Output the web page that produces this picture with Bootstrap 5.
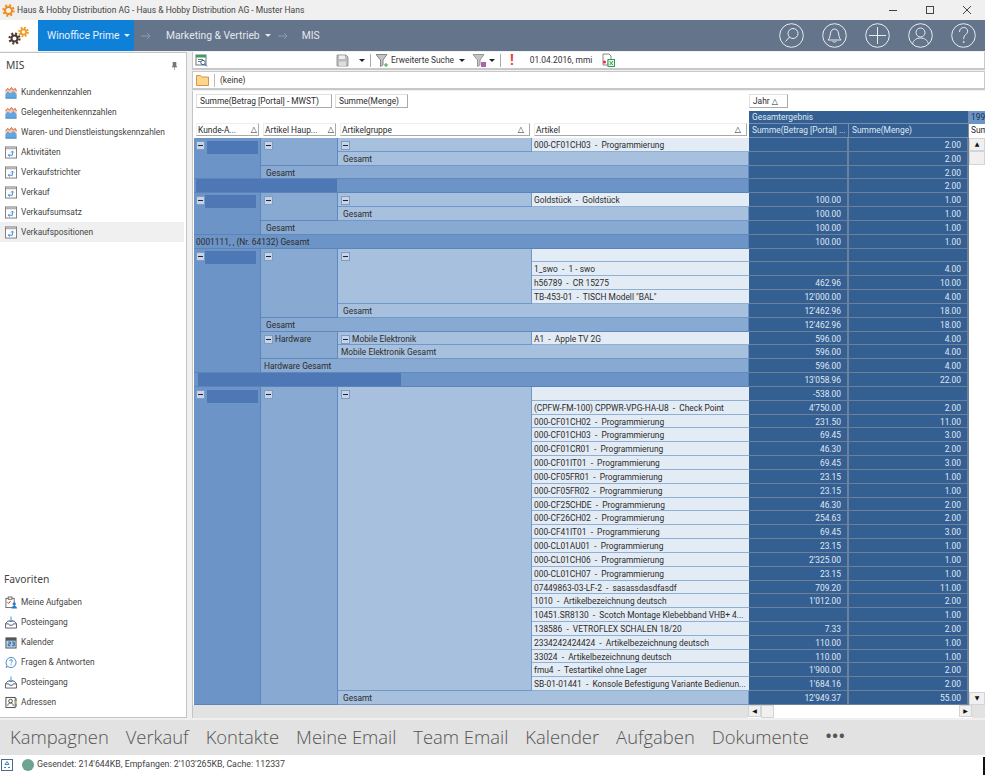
<!DOCTYPE html>
<html lang="de">
<head>
<meta charset="utf-8">
<title>Winoffice Prime - MIS</title>
<link href="https://cdn.jsdelivr.net/npm/bootstrap@5.3.0/dist/css/bootstrap.min.css" rel="stylesheet">
<style>
html,body{height:775px;overflow:hidden;background:#fff}
body{font-family:Roboto,"Liberation Sans",sans-serif;font-size:8.4px;color:#333}
.app-frame{width:985px;height:775px}
.title-strip{height:20px;background:#f0f0f0;font-size:8.5px;color:#444}
.title-icon{margin:0 2px 0 2px}
.win-btn{width:37px;text-align:center;line-height:1}
.top-nav{height:31px;background:#64748a;color:#e4e8ee;font-size:10.3px}
.logo-box{width:38px;background:#fff}
.prime-tab{width:96px;background:#0f80d8;color:#e6f2fc;padding-left:9px;white-space:nowrap}
.nav-caret{display:inline-block;border:3px solid transparent;border-top:3px solid currentColor;border-bottom:0;margin-left:5px;vertical-align:middle}
.nav-arrow{margin:0 15px 0 7px}
.nav-last{margin-left:-1px}
.nav-round{width:43px}
.workspace{background:#f0f0f0;min-height:0}
.side-panel{width:187px;background:#fff;border:1px solid #c4c4c4;border-left:0;margin:1px 5px 2px 0;padding-bottom:5px}
.side-head{height:26px;padding:0 8px 0 6px;font-family:"Noto Sans",sans-serif;font-size:10.3px;color:#444}
.side-gap{height:3px}
.side-item{height:20px;padding-left:5px;font-size:8.4px;color:#444;gap:4px;margin-right:2px;white-space:nowrap}
.side-item svg{flex-shrink:0}
.side-item.is-on{background:#f0f0f0}
.fav-head{font-family:"Noto Sans",sans-serif;font-size:10.3px;color:#444;padding-left:4px;margin-bottom:5px}
.main-panel{min-width:0;width:793px;margin-top:1px}
.tool-row{height:18px;background:#fff;border:1px solid #c8c8c8;border-width:0 1px 2px 1px;margin-bottom:1px;padding-left:2px;font-size:8.4px;color:#333}
.tool-row.row-two{height:19px;margin-bottom:1px;padding-left:3px;border-top:1px solid #c8c8c8}
.t-save{margin-left:128px}
.t-sep{width:1px;height:13px;background:#aaa;margin:0 5px}
.t-drop{display:inline-block;border:3px solid transparent;border-top:3px solid #222;border-bottom:0}
.t-gap1{margin-left:10px}
.t-text1{margin-left:2px}
.t-gap3{margin-left:8px}
.t-gap4{margin-left:3px}
.t-gap6{margin-left:5px}
.t-bang{color:#e8383c;font-size:14px;font-weight:700;margin:0 16px 0 4px;line-height:1}
.t-gap5{margin-left:9px}
.sep2{width:1px;height:13px;background:#bbb;margin:0 5px}
.pivot-box{background:#e2e2e2;border-left:1px solid #c4c4c4;min-height:0;margin-bottom:2px}
.pivot-grid{display:grid;grid-template-columns:67px 77px 194px 217px 100px 120px 16px;grid-template-rows:20px 13px 14px repeat(41,13.83px);padding-left:1px;background:#fff;overflow:hidden;font-size:8.4px;line-height:14px;color:#2c2c2c}
.pc{overflow:hidden;white-space:nowrap;padding:0 3px;min-width:0}
.field-row{grid-column:span 4;padding:3px 0 0 2px;gap:3px;background:#fff}
.jahr-row{grid-column:span 3;padding-top:3px;background:#fff}
.field-btn{height:14px;border:1px solid #e0e0e0;border-right-color:#aaa;border-bottom-color:#aaa;padding:0 3px;background:#fff;line-height:12px;white-space:nowrap}
.fb1{width:136px}.fb2{width:73px}.fb3{width:39px}
.blank{grid-column:span 4;background:#fff}
.col-btn{background:#fff;border:1px solid #eee;border-right-color:#aaa;border-bottom-color:#aaa;margin:-1px 2px 2px 2px;padding:0 1px;line-height:12px;white-space:nowrap;overflow:hidden;position:relative}
.col-btn.first{margin-left:2px}
.tri{font-family:"DejaVu Sans",sans-serif;font-size:8px}
.dark-head{background:#335f92;color:#dfe8f3;border-right:1px solid #7a8ea8;border-bottom:1px solid #7a8ea8;line-height:12px}
.year-cell{background:#6c94c6;color:#16304f;padding:0 2px;line-height:12px}
.year-sub{background:#fff;padding:0 2px;color:#2c2c2c;line-height:12px}
.k{background:#6c94c6;border-bottom:1px solid #5b84bb;border-right:1px solid #5b84bb;padding-left:2px}
.h{background:#88a9d2;border-bottom:1px solid #5f8abf;border-right:1px solid #5f8abf}
.g{background:#a6c0de;border-bottom:1px solid #6f98c8;border-right:1px solid #6f98c8}
.a{background:#e3ebf5;border-bottom:1px solid #8fb0d6;padding-left:2px}
.v{background:#335f92;color:#e0e8f2;text-align:right;padding:0 6px 0 0;border-right:2px solid #6e8199;border-bottom:1px solid #6e8199}
.cs2{grid-column:span 2}.cs3{grid-column:span 3}.cs4{grid-column:span 4}
.rs2{grid-row:span 2}.rs3{grid-row:span 3}.rs4{grid-row:span 4}.rs5{grid-row:span 5}.rs6{grid-row:span 6}.rs9{grid-row:span 9}.rs22{grid-row:span 22}.rs23{grid-row:span 23}
.pad-s{padding-left:5px}
.pm{display:inline-block;width:9px;height:9px;background:#c5d4e8;border:1px solid #7d9bc3;vertical-align:top;margin-top:3px;position:relative}
.pm::after{content:"";position:absolute;left:1px;right:1px;top:3px;height:1px;background:#223}
.redact{display:inline-block;background:#4d78b5;height:13px;vertical-align:top;margin-top:2px}
.r-a{width:51px;margin-left:2px;margin-top:3px}
.r-b{width:51px;margin-left:0}
.r-c{width:141px;height:14px;margin:0}
.r-d{width:203px;height:14px;margin:0 0 0 2px}
.v-scroll{grid-row:span 41;background:#fff}
.sc-btn{height:13px;background:#f0f0f0;border:1px solid #d4d4d4;text-align:center;line-height:10px;font-size:6px;color:#111;font-family:"DejaVu Sans",sans-serif}
.sc-thumb{height:14px;background:#f0f0f0;border:1px solid #d4d4d4}
.h-scroll{height:13px;padding-left:555px}
.h-track{width:224px;background:#fff}
.h-end{width:13px;height:12px;background:#f0f0f0;border:1px solid #d4d4d4;font-size:6px;line-height:10px;text-align:center;color:#111;font-family:"DejaVu Sans",sans-serif}
.h-thumb{width:13px;background:#f0f0f0;border:1px solid #d4d4d4}
.tab-strip{height:35px;background:#e2e2e2;font-family:"Open Sans",sans-serif;font-weight:300;font-size:18.4px;color:#555;padding-left:10px;gap:17px;line-height:1}
.tab-dots{letter-spacing:1px;font-weight:700;font-size:15px;margin-top:-4px}
.status-strip{height:20px;background:#fff;font-size:8.8px;color:#444;padding-left:1px}
.state-dot{width:12px;height:12px;border-radius:50%;background:#6fa391;margin:0 3px 0 9px}
.edge-mark{width:2px;height:18px;background:#111;margin-top:2px}
</style>
</head>
<body>
<svg width="0" height="0" class="d-block position-absolute">
<defs>
<symbol id="i-chart" viewBox="0 0 13 13"><path d="M.5 12.500V5l2.500-3 2 2 2-3 2 3 2-2 1.500 3v7.500z" fill="#f4c9b4"/><path d="M.5 12.500V8l2.500-2.500 3 2 3-2.500 3.500 3v4.500z" fill="#62a6df"/><path d="M.5 12.700h12" stroke="#3b7db8"/><path d="M.5 5l2.500-3 2 2 2-3 2 3 2-2 1.500 3" fill="none" stroke="#d0562a"/></symbol>
<symbol id="i-rep" viewBox="0 0 13 13"><rect x=".5" y=".5" width="12" height="12" fill="#fff" stroke="#777"/><rect x="1" y="1" width="11" height="2" fill="#b0b0b0"/><path d="M3.500 9.500H8V5M6.500 6.500 8 5l1.500 1.500M5 8 3.500 9.500 5 11" fill="none" stroke="#3a85d0"/></symbol>
<symbol id="i-inbox" viewBox="0 0 13 13"><path d="M.5 8l2.500-3h7l2.500 3v4.500H.5z" fill="#fff" stroke="#556"/><path d="M.5 8H4l1 1.500h3L9 8h3.500" fill="none" stroke="#556"/><path d="M6.500 0v6M4.500 4l2 2 2-2" fill="none" stroke="#3a85d0"/></symbol>
</defs>
</svg>
<div class="app-frame d-flex flex-column">
  <div class="title-strip d-flex align-items-center">
    <svg class="title-icon" width="13" height="13" viewBox="0 0 13 13"><circle cx="6.500" cy="6.500" r="3.500" fill="none" stroke="#f08c1e" stroke-width="2"/><circle cx="6.500" cy="6.500" r="5.200" fill="none" stroke="#f08c1e" stroke-width="2" stroke-dasharray="2 2.080"/></svg>
    <span class="flex-grow-1">Haus &amp; Hobby Distribution AG - Haus &amp; Hobby Distribution AG - Muster Hans</span>
    <span class="win-btn"><svg width="10" height="10" viewBox="0 0 10 10"><path d="M1 5.500h8" stroke="#444"/></svg></span>
    <span class="win-btn"><svg width="10" height="10" viewBox="0 0 10 10"><rect x="1.500" y="1.500" width="7" height="7" fill="none" stroke="#444"/></svg></span>
    <span class="win-btn"><svg width="10" height="10" viewBox="0 0 10 10"><path d="M1 1l8 8M9 1l-8 8" stroke="#444"/></svg></span>
  </div>
  <div class="top-nav d-flex align-items-stretch">
    <div class="logo-box d-flex align-items-center justify-content-center">
      <svg width="24" height="20" viewBox="0 0 24 20"><circle cx="7.500" cy="12.500" r="3" fill="none" stroke="#4a3a30" stroke-width="2"/><circle cx="7.500" cy="12.500" r="5" fill="none" stroke="#4a3a30" stroke-width="2.200" stroke-dasharray="2 1.930"/><circle cx="16.500" cy="6" r="2.600" fill="none" stroke="#f09a1e" stroke-width="1.800"/><circle cx="16.500" cy="6" r="4.300" fill="none" stroke="#f09a1e" stroke-width="2" stroke-dasharray="1.800 1.570"/></svg>
    </div>
    <div class="prime-tab d-flex align-items-center">Winoffice Prime<span class="nav-caret"></span></div>
    <div class="d-flex align-items-center">
      <svg class="nav-arrow" width="10" height="8" viewBox="0 0 10 8"><path d="M0 4h9M6 1l3 3-3 3" fill="none" stroke="#8e9bad"/></svg>
      <span>Marketing &amp; Vertrieb</span><span class="nav-caret"></span>
      <svg class="nav-arrow" width="10" height="8" viewBox="0 0 10 8"><path d="M0 4h9M6 1l3 3-3 3" fill="none" stroke="#8e9bad"/></svg>
      <span class="nav-last">MIS</span>
    </div>
    <div class="ms-auto d-flex align-items-center">
      <span class="nav-round d-flex justify-content-center"><svg width="25" height="25" viewBox="0 0 25 25" fill="none" stroke="#e8ecf1"><circle cx="12.500" cy="12.500" r="11.800"/><circle cx="14" cy="10.500" r="5"/><path d="M10.500 14l-4 4.500"/></svg></span>
      <span class="nav-round d-flex justify-content-center"><svg width="25" height="25" viewBox="0 0 25 25" fill="none" stroke="#e8ecf1"><circle cx="12.500" cy="12.500" r="11.800"/><path d="M6 17c2-2 2-4 2.500-7 .5-2.500 2-4 4-4s3.500 1.500 4 4c.5 3 .5 5 2.500 7zM10.500 18c.5 1.500 3.500 1.500 4 0"/></svg></span>
      <span class="nav-round d-flex justify-content-center"><svg width="25" height="25" viewBox="0 0 25 25" fill="none" stroke="#e8ecf1"><circle cx="12.500" cy="12.500" r="11.800"/><path d="M12.500 4v17M4 12.500h17"/></svg></span>
      <span class="nav-round d-flex justify-content-center"><svg width="25" height="25" viewBox="0 0 25 25" fill="none" stroke="#e8ecf1"><circle cx="12.500" cy="12.500" r="11.800"/><circle cx="12.500" cy="9.500" r="4.500"/><path d="M4.500 21c1-4 4-6 8-6s7 2 8 6"/></svg></span>
      <span class="nav-round d-flex justify-content-center"><svg width="25" height="25" viewBox="0 0 25 25" fill="none" stroke="#e8ecf1"><circle cx="12.500" cy="12.500" r="11.800"/><path d="M8.500 9c0-3 2-4.500 4.200-4.500s4 1.500 4 3.700c0 3.300-4 3.300-4 7v1"/><circle cx="12.700" cy="19" r=".6"/></svg></span>
    </div>
  </div>
  <div class="workspace flex-grow-1 d-flex">
    <aside class="side-panel d-flex flex-column flex-shrink-0">
      <div class="side-head d-flex align-items-center justify-content-between"><span>MIS</span><svg width="7" height="8" viewBox="0 0 7 8"><path d="M2 0h3v4l1 1H1l1-1zM3.500 5v3" fill="#777" stroke="#777" stroke-width=".6"/></svg></div>
      <div class="side-gap"></div>
      <div class="side-item d-flex align-items-center"><svg width="12" height="13"><use href="#i-chart"/></svg>Kundenkennzahlen</div>
      <div class="side-item d-flex align-items-center"><svg width="12" height="13"><use href="#i-chart"/></svg>Gelegenheitenkennzahlen</div>
      <div class="side-item d-flex align-items-center"><svg width="12" height="13"><use href="#i-chart"/></svg>Waren- und Dienstleistungskennzahlen</div>
      <div class="side-item d-flex align-items-center"><svg width="12" height="13"><use href="#i-rep"/></svg>Aktivitäten</div>
      <div class="side-item d-flex align-items-center"><svg width="12" height="13"><use href="#i-rep"/></svg>Verkaufstrichter</div>
      <div class="side-item d-flex align-items-center"><svg width="12" height="13"><use href="#i-rep"/></svg>Verkauf</div>
      <div class="side-item d-flex align-items-center"><svg width="12" height="13"><use href="#i-rep"/></svg>Verkaufsumsatz</div>
      <div class="side-item is-on d-flex align-items-center"><svg width="12" height="13"><use href="#i-rep"/></svg>Verkaufspositionen</div>
      <div class="fav-head mt-auto">Favoriten</div>
      <div class="side-item d-flex align-items-center"><svg width="12" height="13" viewBox="0 0 13 13"><rect x="1" y="2" width="9" height="10" fill="#fff" stroke="#666"/><rect x="3.500" y="0.500" width="4" height="2.500" fill="#fff" stroke="#666"/><path d="M2.500 6l1.500 1.500L6 5" fill="none" stroke="#d22"/><circle cx="10" cy="8" r="1.800" fill="#2b7cc4"/><path d="M7 13c0-2 1.500-3 3-3s3 1 3 3z" fill="#2b7cc4"/></svg>Meine Aufgaben</div>
      <div class="side-item d-flex align-items-center"><svg width="12" height="13"><use href="#i-inbox"/></svg>Posteingang</div>
      <div class="side-item d-flex align-items-center"><svg width="12" height="13" viewBox="0 0 13 13"><rect x="1" y="1.500" width="11" height="11" fill="#bcd3ea" stroke="#555"/><rect x="1" y="1.500" width="11" height="3" fill="#555"/><path d="M3.500 6h2.500v2H3.500v2H6M7.500 6H10v4H7.500M8 8h2" fill="none" stroke="#1d5f9e"/></svg>Kalender</div>
      <div class="side-item d-flex align-items-center"><svg width="12" height="13" viewBox="0 0 13 13" fill="none" stroke="#3a85c8"><path d="M6.500 1a5.500 5.500 0 1 1-3.400 9.800L1.500 12l.5-2.500A5.500 5.500 0 0 1 6.500 1z"/><path d="M5 5c0-1 .7-1.500 1.500-1.500S8 4 8 5c0 1.200-1.500 1.200-1.500 2.500M6.500 8.500v1"/></svg>Fragen &amp; Antworten</div>
      <div class="side-item d-flex align-items-center"><svg width="12" height="13"><use href="#i-inbox"/></svg>Posteingang</div>
      <div class="side-item d-flex align-items-center"><svg width="12" height="13" viewBox="0 0 13 13"><rect x="1" y="1" width="10" height="11" fill="#fff" stroke="#444"/><circle cx="6" cy="5" r="2" fill="none" stroke="#444"/><path d="M3 10c0-2 1.500-3 3-3s3 1 3 3" fill="none" stroke="#444"/><path d="M12 2v3" stroke="#2a8fd0" stroke-width="1.500"/><path d="M12 5v3" stroke="#e8b020" stroke-width="1.500"/><path d="M12 8v3" stroke="#3aa050" stroke-width="1.500"/></svg>Adressen</div>
    </aside>
    <main class="main-panel d-flex flex-column flex-grow-1">
      <div class="tool-row d-flex align-items-center">
        <svg width="13" height="13" viewBox="0 0 13 13"><rect x="1" y="1" width="10" height="10" fill="#fff" stroke="#777"/><rect x="1" y="1" width="10" height="2.500" fill="#3aa060"/><path d="M3 5.500h5M3 7.500h3" stroke="#777"/><circle cx="8" cy="8.500" r="2.200" fill="#fff" stroke="#3568a8"/><path d="M9.500 10l2.500 2.500" stroke="#3568a8"/></svg>
        <svg class="t-save" width="13" height="13" viewBox="0 0 13 13"><path d="M1 1h9l2 2v9H1z" fill="#bbb" stroke="#999"/><rect x="3" y="1.500" width="6" height="3.500" fill="#eee"/><rect x="3" y="7.500" width="7" height="4.500" fill="#ddd"/></svg>
        <span class="t-drop t-gap1"></span><span class="t-sep"></span>
        <svg width="13" height="13" viewBox="0 0 13 13"><path d="M0 .500h11L7 6v5L4.500 12.500V6z" fill="#c4c4c4" stroke="#888"/><path d="M10 9v4M8 11h4" stroke="#3aa050"/></svg>
        <span class="t-text1">Erweiterte Suche</span><span class="t-drop t-gap6"></span>
        <svg class="t-gap3" width="13" height="13" viewBox="0 0 13 13"><path d="M0 .500h11L7 6v5L4.500 12.500V6z" fill="#c4c4c4" stroke="#999"/><rect x="8" y="8" width="5" height="5" fill="#b060b0"/></svg>
        <span class="t-drop t-gap4"></span><span class="t-sep"></span>
        <span class="t-bang">!</span>
        <span>01.04.2016, mmi</span>
        <svg class="t-gap5" width="14" height="14" viewBox="0 0 14 14"><path d="M2 1h6l2 2v4H7v5H2z" fill="#fff" stroke="#888"/><circle cx="3.500" cy="9" r="1.500" fill="#e24"/><rect x="7" y="6.500" width="6.500" height="7" fill="#e8f6ea" stroke="#2ea050"/><path d="M8.800 8.200l3 3.800M11.800 8.200l-3 3.800" stroke="#2ea050"/></svg>
      </div>
      <div class="tool-row row-two d-flex align-items-center">
        <svg width="13" height="12" viewBox="0 0 13 12"><path d="M.500 1.500h4l1 1.500h7v8.500H.500z" fill="#fbd78c" stroke="#d9924a"/></svg>
        <span class="sep2"></span><span>(keine)</span>
      </div>
      <div class="pivot-box flex-grow-1 d-flex flex-column">
        <div class="pivot-grid">
          <div class="field-row d-flex"><div class="field-btn fb1">Summe(Betrag [Portal] - MWST)</div><div class="field-btn fb2">Summe(Menge)</div></div>
          <div class="jahr-row"><div class="field-btn fb3">Jahr <span class="tri">△</span></div></div>
          <div class="blank"></div>
          <div class="pc dark-head cs2">Gesamtergebnis</div><div class="year-cell pc">1995</div>
          <div class="col-btn first d-flex justify-content-between"><span>Kunde-A...</span><span class="tri">△</span></div>
          <div class="col-btn d-flex justify-content-between"><span>Artikel Haup...</span><span class="tri">△</span></div>
          <div class="col-btn d-flex justify-content-between"><span>Artikelgruppe</span><span class="tri pe-1">△</span></div>
          <div class="col-btn d-flex justify-content-between"><span>Artikel</span><span class="tri pe-1">△</span></div>
          <div class="pc dark-head">Summe(Betrag [Portal] ...</div><div class="pc dark-head">Summe(Menge)</div><div class="year-sub pc">Summe</div>

          <div class="pc k rs3"><span class="pm"></span><span class="redact r-a"></span></div><div class="pc h rs2"><span class="pm"></span></div><div class="pc g"><span class="pm"></span></div><div class="pc a">000-CF01CH03&nbsp; -&nbsp; Programmierung</div><div class="pc v"></div><div class="pc v">2.00</div>
          <div class="v-scroll d-flex flex-column"><div class="sc-btn">▲</div><div class="sc-thumb"></div><div class="flex-grow-1"></div><div class="sc-btn">▼</div></div>
          <div class="pc g cs2 pad-s">Gesamt</div><div class="pc v"></div><div class="pc v">2.00</div>
          <div class="pc h cs3 pad-s">Gesamt</div><div class="pc v"></div><div class="pc v">2.00</div>
          <div class="pc k cs4"><span class="redact r-c"></span></div><div class="pc v"></div><div class="pc v">2.00</div>

          <div class="pc k rs3"><span class="pm"></span><span class="redact r-b"></span></div><div class="pc h rs2"><span class="pm"></span></div><div class="pc g"><span class="pm"></span></div><div class="pc a">Goldstück&nbsp; -&nbsp; Goldstück</div><div class="pc v">100.00</div><div class="pc v">1.00</div>
          <div class="pc g cs2 pad-s">Gesamt</div><div class="pc v">100.00</div><div class="pc v">1.00</div>
          <div class="pc h cs3 pad-s">Gesamt</div><div class="pc v">100.00</div><div class="pc v">1.00</div>
          <div class="pc k cs4">0001111, , (Nr. 64132) Gesamt</div><div class="pc v">100.00</div><div class="pc v">1.00</div>

          <div class="pc k rs9"><span class="pm"></span><span class="redact r-b"></span></div><div class="pc h rs5"><span class="pm"></span></div><div class="pc g rs4"><span class="pm"></span></div><div class="pc a"></div><div class="pc v"></div><div class="pc v"></div>
          <div class="pc a">1_swo&nbsp; -&nbsp; 1 - swo</div><div class="pc v"></div><div class="pc v">4.00</div>
          <div class="pc a">h56789&nbsp; -&nbsp; CR 15275</div><div class="pc v">462.96</div><div class="pc v">10.00</div>
          <div class="pc a">TB-453-01&nbsp; -&nbsp; TISCH Modell "BAL"</div><div class="pc v">12'000.00</div><div class="pc v">4.00</div>
          <div class="pc g cs2 pad-s">Gesamt</div><div class="pc v">12'462.96</div><div class="pc v">18.00</div>
          <div class="pc h cs3 pad-s">Gesamt</div><div class="pc v">12'462.96</div><div class="pc v">18.00</div>
          <div class="pc h rs2"><span class="pm"></span> Hardware</div><div class="pc g"><span class="pm"></span> Mobile Elektronik</div><div class="pc a">A1&nbsp; -&nbsp; Apple TV 2G</div><div class="pc v">596.00</div><div class="pc v">4.00</div>
          <div class="pc g cs2">Mobile Elektronik Gesamt</div><div class="pc v">596.00</div><div class="pc v">4.00</div>
          <div class="pc h cs3">Hardware Gesamt</div><div class="pc v">596.00</div><div class="pc v">4.00</div>
          <div class="pc k cs4"><span class="redact r-d"></span></div><div class="pc v">13'058.96</div><div class="pc v">22.00</div>

          <div class="pc k rs23"><span class="pm"></span><span class="redact r-a"></span></div><div class="pc h rs23"><span class="pm"></span></div><div class="pc g rs22"><span class="pm"></span></div><div class="pc a"></div><div class="pc v">-538.00</div><div class="pc v"></div>
          <div class="pc a">(CPFW-FM-100) CPPWR-VPG-HA-U8&nbsp; -&nbsp; Check Point</div><div class="pc v">4'750.00</div><div class="pc v">2.00</div>
          <div class="pc a">000-CF01CH02&nbsp; -&nbsp; Programmierung</div><div class="pc v">231.50</div><div class="pc v">11.00</div>
          <div class="pc a">000-CF01CH03&nbsp; -&nbsp; Programmierung</div><div class="pc v">69.45</div><div class="pc v">3.00</div>
          <div class="pc a">000-CF01CR01&nbsp; -&nbsp; Programmierung</div><div class="pc v">46.30</div><div class="pc v">2.00</div>
          <div class="pc a">000-CF01IT01&nbsp; -&nbsp; Programmierung</div><div class="pc v">69.45</div><div class="pc v">3.00</div>
          <div class="pc a">000-CF05FR01&nbsp; -&nbsp; Programmierung</div><div class="pc v">23.15</div><div class="pc v">1.00</div>
          <div class="pc a">000-CF05FR02&nbsp; -&nbsp; Programmierung</div><div class="pc v">23.15</div><div class="pc v">1.00</div>
          <div class="pc a">000-CF25CHDE&nbsp; -&nbsp; Programmierung</div><div class="pc v">46.30</div><div class="pc v">2.00</div>
          <div class="pc a">000-CF26CH02&nbsp; -&nbsp; Programmierung</div><div class="pc v">254.63</div><div class="pc v">2.00</div>
          <div class="pc a">000-CF41IT01&nbsp; -&nbsp; Programmierung</div><div class="pc v">69.45</div><div class="pc v">3.00</div>
          <div class="pc a">000-CL01AU01&nbsp; -&nbsp; Programmierung</div><div class="pc v">23.15</div><div class="pc v">1.00</div>
          <div class="pc a">000-CL01CH06&nbsp; -&nbsp; Programmierung</div><div class="pc v">2'325.00</div><div class="pc v">1.00</div>
          <div class="pc a">000-CL01CH07&nbsp; -&nbsp; Programmierung</div><div class="pc v">23.15</div><div class="pc v">1.00</div>
          <div class="pc a">07449863-03-LF-2&nbsp; -&nbsp; sasassdasdfasdf</div><div class="pc v">709.20</div><div class="pc v">11.00</div>
          <div class="pc a">1010&nbsp; -&nbsp; Artikelbezeichnung deutsch</div><div class="pc v">1'012.00</div><div class="pc v">2.00</div>
          <div class="pc a">10451.SR8130&nbsp; -&nbsp; Scotch Montage Klebebband VHB+ 4...</div><div class="pc v"></div><div class="pc v">1.00</div>
          <div class="pc a">138586&nbsp; -&nbsp; VETROFLEX SCHALEN 18/20</div><div class="pc v">7.33</div><div class="pc v">2.00</div>
          <div class="pc a">2334242424424&nbsp; -&nbsp; Artikelbezeichnung deutsch</div><div class="pc v">110.00</div><div class="pc v">1.00</div>
          <div class="pc a">33024&nbsp; -&nbsp; Artikelbezeichnung deutsch</div><div class="pc v">110.00</div><div class="pc v">1.00</div>
          <div class="pc a">fmu4&nbsp; -&nbsp; Testartikel ohne Lager</div><div class="pc v">1'900.00</div><div class="pc v">2.00</div>
          <div class="pc a">SB-01-01441&nbsp; -&nbsp; Konsole Befestigung Variante Bedienun...</div><div class="pc v">1'684.16</div><div class="pc v">2.00</div>
          <div class="pc g cs2 pad-s">Gesamt</div><div class="pc v">12'949.37</div><div class="pc v">55.00</div>
        </div>
        <div class="h-scroll d-flex">
          <div class="h-track d-flex"><div class="h-end">◀</div><div class="h-thumb"></div><div class="flex-grow-1"></div><div class="h-end">▶</div></div>
        </div>
      </div>
    </main>
  </div>
  <div class="tab-strip d-flex align-items-center flex-shrink-0">
    <span>Kampagnen</span><span>Verkauf</span><span>Kontakte</span><span>Meine Email</span><span>Team Email</span><span>Kalender</span><span>Aufgaben</span><span>Dokumente</span><span class="tab-dots">•••</span>
  </div>
  <div class="status-strip d-flex align-items-center flex-shrink-0">
    <svg width="12" height="12" viewBox="0 0 12 12"><rect x=".5" y=".5" width="11" height="11" fill="#fff" stroke="#4a6a8a"/><path d="M6 2.500l2 3H4zM3 8.500h2M9 8.500H7" fill="none" stroke="#3a85c8"/></svg>
    <span class="state-dot"></span>
    <span class="flex-grow-1">Gesendet: 214'644KB, Empfangen: 2'103'265KB, Cache: 112337</span>
    <span class="edge-mark"></span>
  </div>
</div>
</body>
</html>
